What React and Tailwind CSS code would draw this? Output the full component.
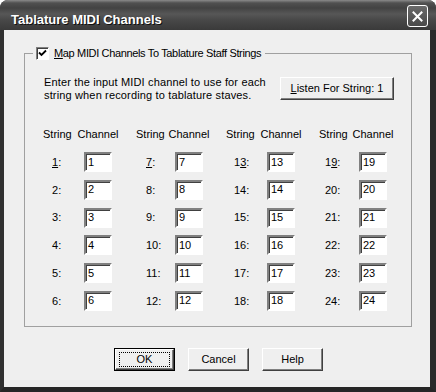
import React from 'react'

const font = "font-['Liberation_Sans',Arial,sans-serif]"

const columns = [
  { start: 1, width: 'w-[93px]', grid: 'grid-cols-[41px_28px]', pad: 'pl-[9px]', keyIdx: 0 },
  { start: 7, width: 'w-[90px]', grid: 'grid-cols-[39px_28px]', pad: 'pl-[10px]', keyIdx: 0 },
  { start: 13, width: 'w-[93px]', grid: 'grid-cols-[41px_28px]', pad: 'pl-[8px]', keyIdx: 1 },
  { start: 19, width: 'w-[92px]', grid: 'grid-cols-[40px_28px]', pad: 'pl-[6px]', keyIdx: 1 },
]

function StringLabel({ n, first, keyIdx }) {
  const text = String(n)
  if (!first) return <span>{text}:</span>
  return (
    <span>
      {text.split('').map((ch, i) => (
        <span key={i} className={i === keyIdx ? 'underline underline-offset-[1px]' : ''}>{ch}</span>
      ))}
      :
    </span>
  )
}

function ChannelColumn({ col }) {
  const rows = [0, 1, 2, 3, 4, 5].map((i) => col.start + i)
  return (
    <div className={`${col.width} shrink-0`}>
      <div className={`grid ${col.grid} leading-[13px]`}>
        <span>String</span>
        <span className="justify-self-center whitespace-nowrap">Channel</span>
      </div>
      <div className="mt-[11px] flex flex-col gap-y-[7.8px]">
        {rows.map((n, i) => (
          <div key={n} className={`grid ${col.grid} h-[20px] items-center`}>
            <span className={col.pad}>
              <StringLabel n={n} first={i === 0} keyIdx={col.keyIdx} />
            </span>
            <div className="flex h-[20px] w-[28px] items-center border-2 border-t-[#808080] border-l-[#808080] border-r-white border-b-white bg-white pl-[2px] shadow-[inset_1px_1px_0_#404040] leading-none">
              {n}
            </div>
          </div>
        ))}
      </div>
    </div>
  )
}

function Button({ children, isDefault, className = '' }) {
  if (isDefault) {
    return (
      <div className={`h-[23px] border border-black ${className}`}>
        <div className="flex h-full items-center justify-center border border-t-white border-l-white border-r-[#404040] border-b-[#404040] bg-[#efefef] shadow-[inset_-1px_-1px_0_#808080]">
          <span className="flex h-[15px] w-[51px] items-center justify-center border border-dotted border-black leading-none">
            {children}
          </span>
        </div>
      </div>
    )
  }
  return (
    <div className={`flex h-[23px] items-center justify-center border border-t-white border-l-white border-r-[#404040] border-b-[#404040] bg-[#efefef] shadow-[inset_-1px_-1px_0_#808080] leading-none ${className}`}>
      {children}
    </div>
  )
}

export default function App() {
  return (
    <div className={`h-[392px] w-[436px] bg-white text-[11px] text-black ${font}`}>
      <div className="flex h-full flex-col overflow-hidden rounded-t-[8px] bg-[#2f2f2f]">
        {/* Title bar */}
        <div className="flex h-[30px] shrink-0 items-start justify-between bg-[linear-gradient(to_bottom,#8a8a8a_0px,#505050_3px,#434343_8px,#575757_14px,#484848_20px,#3a3a3a_30px)] pl-[11px] pr-[8px]">
          <span className="pt-[12px] text-[13px] font-bold leading-[15px] text-white [text-shadow:1px_1px_0_#111]">
            Tablature MIDI Channels
          </span>
          <div className="mt-[5px] flex h-[22px] w-[21px] items-center justify-center rounded-[3px] border border-white bg-[linear-gradient(to_bottom,#6a6a6a,#4a4a4a)]">
            <svg width="13" height="13" viewBox="0 0 13 13">
              <path d="M2.5 2.5 L10.5 10.5 M10.5 2.5 L2.5 10.5" stroke="white" strokeWidth="2" strokeLinecap="square" />
            </svg>
          </div>
        </div>

        {/* Body */}
        <div className="flex-1 border-b-[5px] border-l-4 border-r-[6px] border-b-[#262626] border-l-[#303030] border-r-[#2a2a2a] bg-[#efefef]">
          <fieldset className="ml-[20px] mt-[17px] h-[280px] w-[388px] border border-[#a0a0a0]">
            <legend className="ml-[8px] px-[3px]">
              <div className="flex h-[13px] items-center gap-[5px] pr-[1px]">
                <div className="flex h-[13px] w-[13px] items-center justify-center border border-t-[#808080] border-l-[#808080] border-r-white border-b-white bg-white shadow-[inset_1px_1px_0_#404040]">
                  <svg width="9" height="9" viewBox="0 0 9 9">
                    <path d="M1 3.5 L3.5 6 L8 1.5" fill="none" stroke="black" strokeWidth="1.8" />
                  </svg>
                </div>
                <span className="leading-[13px] tracking-[-0.35px]">
                  <span className="underline underline-offset-[1px]">M</span>ap MIDI Channels To Tablature Staff Strings
                </span>
              </div>
            </legend>

            <div className="flex items-start justify-between pl-[19px] pr-[17px] pt-[16px]">
              <p className="leading-[13px] tracking-[0.15px]">
                Enter the input MIDI channel to use for each
                <br />
                string when recording to tablature staves.
              </p>
              <Button className="mt-[1px] w-[114px]">
                <span>
                  <span className="underline underline-offset-[1px]">L</span>isten For String: 1
                </span>
              </Button>
            </div>

            <div className="mt-[26px] flex pl-[18px]">
              {columns.map((col) => (
                <ChannelColumn key={col.start} col={col} />
              ))}
            </div>
          </fieldset>

          <div className="mt-[21px] flex gap-[13px] pl-[110px]">
            <Button isDefault className="w-[61px]">OK</Button>
            <Button className="w-[61px]">Cancel</Button>
            <Button className="w-[61px]">Help</Button>
          </div>
        </div>
      </div>
    </div>
  )
}
